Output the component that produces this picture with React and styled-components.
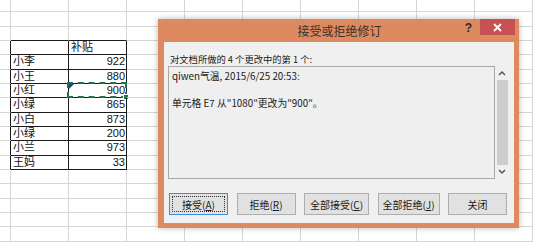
import React from "react";
import styled, { createGlobalStyle } from "styled-components";

const Global = createGlobalStyle`
  html, body { margin: 0; padding: 0; background: #fff; }
  body { width: 533px; height: 244px; overflow: hidden; }
`;

const Page = styled.div`
  position: relative;
  width: 533px;
  height: 244px;
  overflow: hidden;
  background: #fff;
`;

const Sheet = styled.div`
  display: grid;
  grid-template-columns: 11px repeat(9, 58px);
  grid-template-rows: 12.33px repeat(16, 14.33px);
  font-family: "Liberation Sans", "Noto Sans CJK SC", sans-serif;
  font-size: 11px;
  color: #111;
`;

const Cell = styled.div`
  position: relative;
  box-sizing: border-box;
  border-right: 1px solid ${(p) => (p.$darkRight ? "#1a1a1a" : "#d6d6d6")};
  border-bottom: 1px solid ${(p) => (p.$darkBottom ? "#1a1a1a" : "#d6d6d6")};
  padding: 0 ${(p) => (p.$num ? "1px" : "2px")};
  text-align: ${(p) => (p.$num ? "right" : "left")};
  line-height: 13.5px;
  white-space: nowrap;
  overflow: visible;
`;

const Ants = styled.div`
  position: absolute;
  left: -2px;
  top: -2px;
  right: -1px;
  bottom: -1px;
  border: 2px dashed #217346;
  pointer-events: none;
`;

const Handle = styled.div`
  position: absolute;
  right: -3px;
  bottom: -3px;
  width: 4px;
  height: 4px;
  background: #217346;
  border: 1px solid #fff;
`;

const Marker = styled.div`
  position: absolute;
  left: 0;
  top: 0;
  width: 0;
  height: 0;
  border-top: 5px solid #1f3fa0;
  border-right: 5px solid transparent;
`;

const Dialog = styled.div`
  position: absolute;
  left: 158px;
  top: 19px;
  width: 361px;
  height: 209px;
  box-sizing: border-box;
  background: #de8a61;
  padding: 0 5px 5px 6px;
  display: flex;
  flex-direction: column;
  box-shadow: 0 0 6px rgba(0, 0, 0, 0.28);
  font-family: "Noto Sans CJK SC", "Liberation Sans", sans-serif;
`;

const TitleBar = styled.div`
  height: 23px;
  display: grid;
  grid-template-columns: 1fr auto 1fr;
  align-items: start;
  margin-right: -1px;
`;

const Title = styled.div`
  grid-column: 2;
  font-size: 12px;
  line-height: 24px;
  color: #3b3029;
`;

const Controls = styled.div`
  grid-column: 3;
  justify-self: end;
  display: flex;
  align-items: flex-start;
  gap: 8px;
`;

const Help = styled.span`
  font-family: "Liberation Sans", sans-serif;
  font-weight: bold;
  font-size: 12px;
  line-height: 17px;
  margin-top: 1px;
  color: #2e2a27;
`;

const Close = styled.div`
  width: 35px;
  height: 16px;
  background: #c75050;
  display: flex;
  align-items: center;
  justify-content: center;
`;

const Client = styled.div`
  flex: 1;
  background: #f0f0f0;
  padding: 0 6px 8px 4px;
  display: flex;
  flex-direction: column;
`;

const Label = styled.div`
  font-size: 9.3px;
  line-height: 14px;
  color: #1a1a1a;
  margin: 10px 0 0 2px;
`;

const BoxRow = styled.div`
  display: flex;
  gap: 1px;
  height: 113px;
`;

const TextBox = styled.div`
  flex: 1;
  box-sizing: border-box;
  border: 1px solid #a8a8a8;
  background: #efefef;
  padding: 3px 3px;
  font-size: 9.8px;
  line-height: 13.7px;
  color: #1a1a1a;
`;

const Line = styled.div`
  min-height: 13.7px;
  white-space: nowrap;
`;

const Scroll = styled.div`
  width: 12px;
  display: flex;
  flex-direction: column;
  align-items: center;
`;

const Arrow = styled.div`
  height: 14px;
  display: flex;
  align-items: center;
  justify-content: center;
`;

const Thumb = styled.div`
  flex: 1;
  width: 11px;
  background: #cdcdcd;
`;

const Buttons = styled.div`
  display: flex;
  gap: 8.5px;
  margin-top: auto;
  padding-left: 1px;
`;

const Button = styled.div`
  position: relative;
  box-sizing: border-box;
  width: ${(p) => p.$w}px;
  height: 22px;
  background: #e1e1e1;
  border: 1px solid ${(p) => (p.$focus ? "#3c8be6" : "#adadad")};
  display: flex;
  align-items: center;
  justify-content: center;
  font-size: 10px;
  color: #1a1a1a;
  ${(p) =>
    p.$focus &&
    `&::after {
      content: "";
      position: absolute;
      inset: 2px;
      border: 1px dotted #333;
    }`}
  u { text-underline-offset: 1px; }
`;

const names = [
  ["小李", 922],
  ["小王", 880],
  ["小红", 900],
  ["小绿", 865],
  ["小白", 873],
  ["小绿", 200],
  ["小兰", 973],
  ["王妈", 33],
];

function cellContent(r, c) {
  if (r === 3 && c === 2) return { text: "补贴" };
  if (r >= 4 && r <= 11) {
    const [n, v] = names[r - 4];
    if (c === 1) return { text: n };
    if (c === 2) return { text: String(v), num: true };
  }
  return { text: "" };
}

function SheetGrid() {
  const cells = [];
  for (let r = 0; r < 17; r++) {
    for (let c = 0; c < 10; c++) {
      const inTableRows = r >= 3 && r <= 11;
      const darkRight = inTableRows && c <= 2;
      const darkBottom = r >= 2 && r <= 11 && (c === 1 || c === 2);
      const { text, num } = cellContent(r, c);
      const selected = r === 6 && c === 2;
      cells.push(
        <Cell key={`${r}-${c}`} $darkRight={darkRight} $darkBottom={darkBottom} $num={num}>
          {text}
          {selected && (
            <>
              <Marker />
              <Ants />
              <Handle />
            </>
          )}
        </Cell>
      );
    }
  }
  return <Sheet>{cells}</Sheet>;
}

export default function App() {
  return (
    <Page>
      <Global />
      <SheetGrid />
      <Dialog>
        <TitleBar>
          <Title>接受或拒绝修订</Title>
          <Controls>
            <Help>?</Help>
            <Close>
              <svg width="9" height="9" viewBox="0 0 9 9">
                <path d="M1 1L8 8M8 1L1 8" stroke="#fff" strokeWidth="1.8" />
              </svg>
            </Close>
          </Controls>
        </TitleBar>
        <Client>
          <Label>对文档所做的 4 个更改中的第 1 个:</Label>
          <BoxRow>
            <TextBox>
              <Line>qiwen气温, 2015/6/25 20:53:</Line>
              <Line />
              <Line>单元格 E7 从"1080"更改为"900"。</Line>
            </TextBox>
            <Scroll>
              <Arrow>
                <svg width="8" height="6" viewBox="0 0 8 6">
                  <path d="M1 5L4 2L7 5" stroke="#555" strokeWidth="1.5" fill="none" />
                </svg>
              </Arrow>
              <Thumb />
              <Arrow>
                <svg width="8" height="6" viewBox="0 0 8 6">
                  <path d="M1 1L4 4L7 1" stroke="#555" strokeWidth="1.5" fill="none" />
                </svg>
              </Arrow>
            </Scroll>
          </BoxRow>
          <Buttons>
            <Button $w={59} $focus>
              接受(<u>A</u>)
            </Button>
            <Button $w={59}>
              拒绝(<u>R</u>)
            </Button>
            <Button $w={65}>
              全部接受(<u>C</u>)
            </Button>
            <Button $w={62}>
              全部拒绝(<u>J</u>)
            </Button>
            <Button $w={59}>关闭</Button>
          </Buttons>
        </Client>
      </Dialog>
    </Page>
  );
}
